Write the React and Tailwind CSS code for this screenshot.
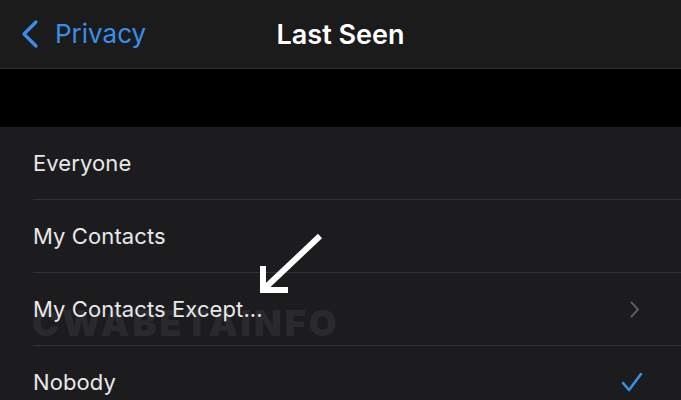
import React from 'react';

const rows = [
  { label: 'Everyone' },
  { label: 'My Contacts' },
  { label: 'My Contacts Except...', chevron: true },
  { label: 'Nobody', checked: true },
];

function Row({ label, chevron, checked, last }) {
  return (
    <div className="relative flex h-[73px] items-center pl-[33px] pr-[40px]">
      <span className="relative z-10 text-[22px] tracking-[0.1px] text-[#e8e8ea]">{label}</span>
      <div className="ml-auto flex items-center">
        {chevron && (
          <svg width="10" height="17" viewBox="0 0 10 17" className="mr-[1px]">
            <path d="M1.5 1.5 L8 8.5 L1.5 15.5" fill="none" stroke="#5c5c60" strokeWidth="2" strokeLinecap="round" strokeLinejoin="round" />
          </svg>
        )}
        {checked && (
          <svg width="22" height="20" viewBox="0 0 22 20" className="-mr-[2px] mb-[2px]">
            <path d="M2 11 L8 18 L20 2" fill="none" stroke="#3a8ee8" strokeWidth="2.6" strokeLinecap="round" strokeLinejoin="round" />
          </svg>
        )}
      </div>
      {!last && <div className="absolute bottom-0 left-[33px] right-0 h-px bg-[#313134]" />}
    </div>
  );
}

export default function App() {
  return (
    <div className="relative h-[400px] w-[681px] overflow-hidden bg-black font-['Inter','Noto_Sans',sans-serif]">
      {/* Nav bar */}
      <div className="relative flex h-[69px] items-center border-b border-[#2c2c2e] bg-[#1b1b1c]">
        <div className="flex items-center pl-[20px] text-[#3a8ee8]">
          <svg width="20" height="30" viewBox="0 0 20 30">
            <path d="M16 3 L4 15 L16 27" fill="none" stroke="#3a8ee8" strokeWidth="3.2" strokeLinecap="round" strokeLinejoin="round" />
          </svg>
          <span className="ml-[15px] text-[26px] leading-none">Privacy</span>
        </div>
        <span className="absolute left-1/2 -translate-x-1/2 text-[27px] font-semibold leading-none text-white">Last Seen</span>
      </div>

      {/* Spacer band */}
      <div className="h-[58px] bg-black" />

      {/* Options list */}
      <div className="relative bg-[#1c1c1e]">
        {rows.map((r, i) => (
          <Row key={r.label} {...r} last={i === rows.length - 1} />
        ))}

        {/* Watermark */}
        <div className="pointer-events-none absolute left-[32px] top-[178px] select-none text-[36px] font-black leading-none tracking-[3px] text-[#2a2a2d]">
          CWABETAINFO
        </div>
      </div>

      {/* Annotation arrow */}
      <svg className="pointer-events-none absolute left-[255px] top-[228px]" width="75" height="70" viewBox="0 0 75 70">
        <path d="M65 8 L10 60" fill="none" stroke="#fff" strokeWidth="6" strokeLinecap="butt" />
        <path d="M8 38 L8 62 L33 62" fill="none" stroke="#fff" strokeWidth="6" strokeLinecap="butt" strokeLinejoin="miter" />
      </svg>
    </div>
  );
}
